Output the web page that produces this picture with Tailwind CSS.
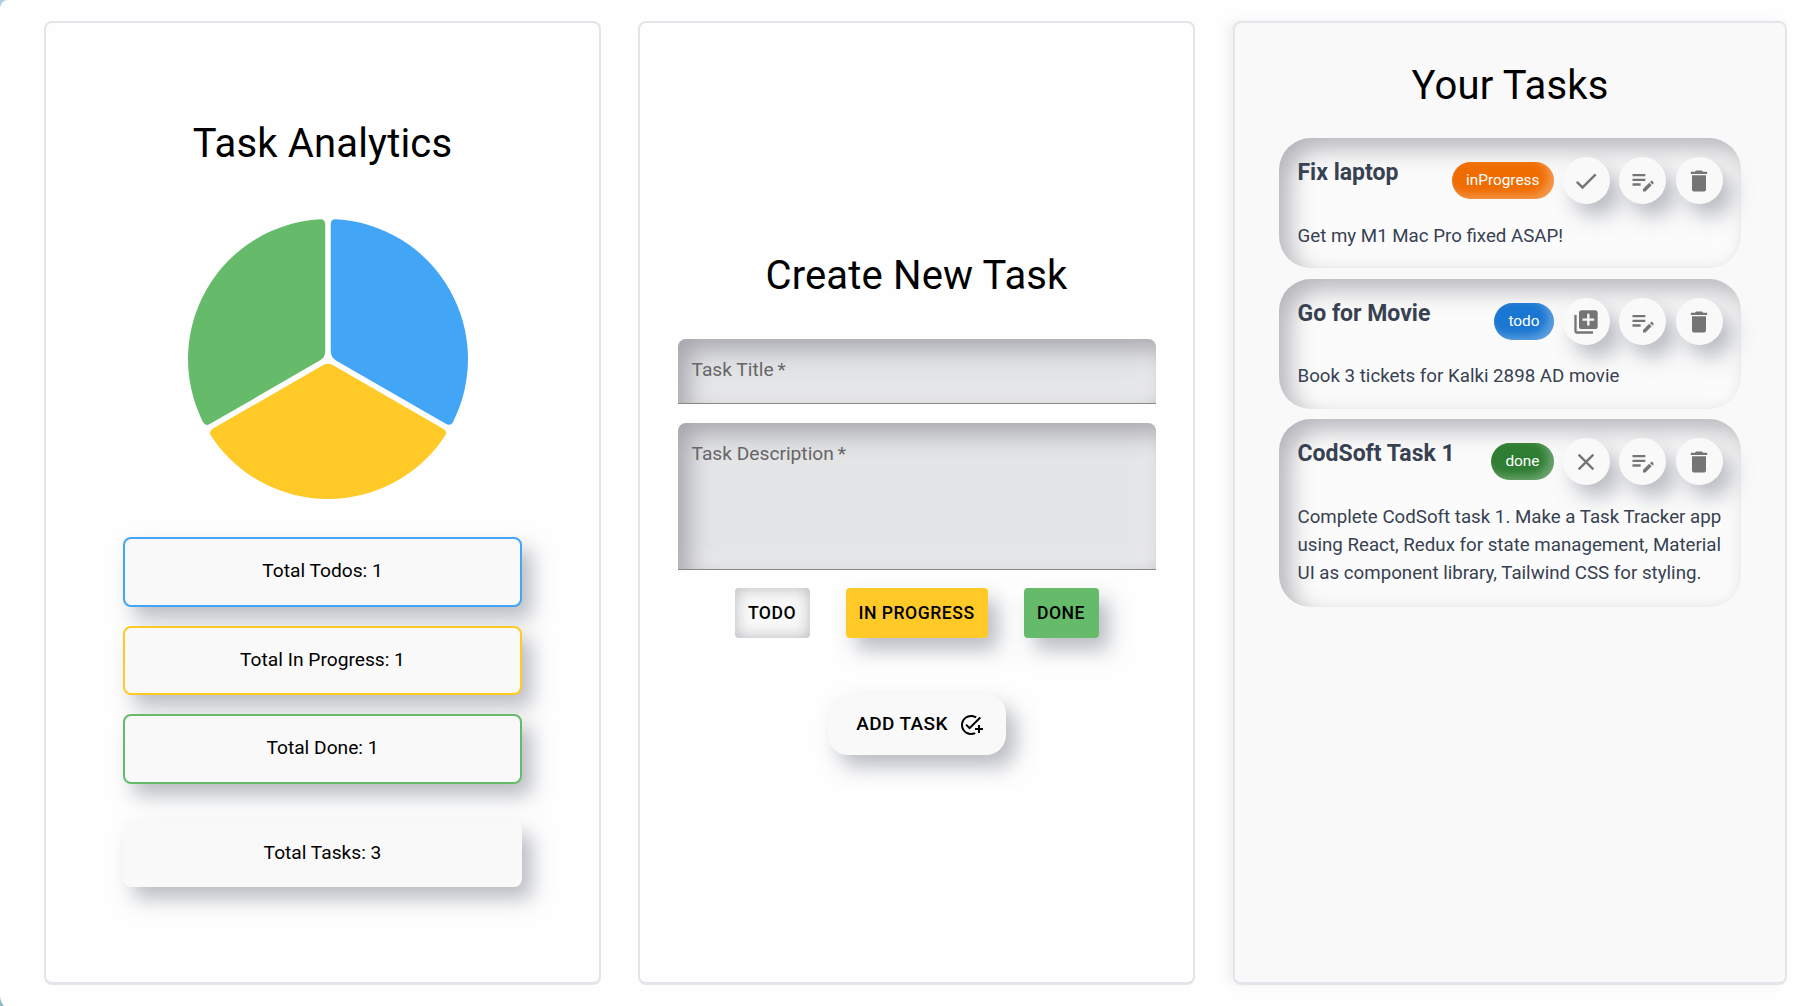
<!DOCTYPE html>
<html lang="en">
<head>
  <meta charset="UTF-8">
  <meta name="viewport" content="width=device-width, initial-scale=1.0">
  <title>Task Tracker</title>
  <script src="https://cdn.jsdelivr.net/npm/@tailwindcss/browser@4"></script>
</head>
<body class="bg-[#fefefe] font-['Roboto',sans-serif] text-black">
  <!-- Window corners -->
  <svg class="absolute top-0 left-0" width="7" height="7" viewBox="0 0 7 7"><path fill="#a9cfe8" d="M0 0H7Q1.5 1 0 7Z"/></svg>
  <svg class="absolute bottom-0 left-0" width="4" height="9" viewBox="0 0 4 9"><path fill="#8fb9c4" d="M0 0Q1 6 4 9H0Z"/></svg>

  <div class="flex h-[1006px] overflow-hidden pl-[44px] pr-[30px] pt-[21px]">

    <!-- Analytics -->
    <section class="w-[557px] h-[964px] flex flex-col items-center border-2 border-[#e4e5ea] border-b-[3px] rounded-lg bg-[#fefefe] pt-[99px]">
      <h2 class="text-[40px] leading-[44px] tracking-[0.16px]">Task Analytics</h2>
      <svg class="mt-[50.5px] ml-[11px]" width="284" height="284" viewBox="-142 -142 284 284">
        <path fill="#42a5f5" d="M2.75 -8 L2.75 -135 Q2.75 -140 8 -139.77 A140 140 0 0 1 124.9 63.2 Q122.6 67.6 117.4 64.6 L8.8 1.9 A11 11 0 0 1 2.75 -8 Z"/>
        <path fill="#ffca28" transform="rotate(120)" d="M2.75 -8 L2.75 -135 Q2.75 -140 8 -139.77 A140 140 0 0 1 124.9 63.2 Q122.6 67.6 117.4 64.6 L8.8 1.9 A11 11 0 0 1 2.75 -8 Z"/>
        <path fill="#66bb6a" transform="rotate(240)" d="M2.75 -8 L2.75 -135 Q2.75 -140 8 -139.77 A140 140 0 0 1 124.9 63.2 Q122.6 67.6 117.4 64.6 L8.8 1.9 A11 11 0 0 1 2.75 -8 Z"/>
      </svg>
      <div class="w-[399px] mt-[36px] flex flex-col text-[19.2px]">
        <div class="h-[70px] flex items-center justify-center rounded-lg bg-[#f9f9f9] border-2 border-[#42a5f5] shadow-[10px_12px_20px_rgba(120,125,140,0.5)]">Total Todos: 1</div>
        <div class="h-[69px] mt-[19px] flex items-center justify-center rounded-lg bg-[#f9f9f9] border-2 border-[#ffca28] shadow-[10px_12px_20px_rgba(120,125,140,0.5)]">Total In Progress: 1</div>
        <div class="h-[70px] mt-[19px] flex items-center justify-center rounded-lg bg-[#f9f9f9] border-2 border-[#66bb6a] shadow-[10px_12px_20px_rgba(120,125,140,0.5)]">Total Done: 1</div>
        <div class="h-[66px] mt-[37px] flex items-center justify-center rounded-lg bg-[#f9f9f9] shadow-[10px_12px_20px_rgba(120,125,140,0.5)]">Total Tasks: 3</div>
      </div>
    </section>

    <!-- New task form -->
    <section class="w-[557px] h-[964px] ml-[37px] flex flex-col items-center border-2 border-[#e4e5ea] border-b-[3px] rounded-lg bg-[#fefefe] pt-[231px]">
      <h2 class="text-[40px] leading-[44px] tracking-[0.16px]">Create New Task</h2>
      <div class="w-[478px] h-[65px] mt-[41px] px-[14px] pt-[19px] text-[19.2px] leading-[24px] text-[#666] bg-[#e4e5e7] border-b border-[#888] rounded-t-lg shadow-[inset_10px_10px_24px_rgba(130,130,140,0.65),inset_-10px_-10px_20px_rgba(255,255,255,0.35)]">Task Title&thinsp;*</div>
      <div class="w-[478px] h-[147px] mt-[19px] px-[14px] pt-[19px] text-[19.2px] leading-[24px] text-[#666] bg-[#e4e5e7] border-b border-[#888] rounded-t-lg shadow-[inset_10px_10px_24px_rgba(130,130,140,0.65),inset_-10px_-10px_20px_rgba(255,255,255,0.35)]">Task Description&thinsp;*</div>
      <div class="flex gap-[36px] mt-[18px] text-[17.6px] font-medium tracking-[0.5px]">
        <button class="h-[50px] w-[75px] rounded bg-[#f9f9f9] shadow-[inset_0_0_16px_rgba(130,130,140,0.55)]">TODO</button>
        <button class="h-[50px] w-[142px] rounded bg-[#ffca28] shadow-[10px_12px_20px_rgba(120,125,140,0.5)]">IN PROGRESS</button>
        <button class="h-[50px] w-[75px] rounded bg-[#66bb6a] shadow-[10px_12px_20px_rgba(120,125,140,0.5)]">DONE</button>
      </div>
      <button class="w-[178px] h-[61px] mt-[56px] pl-[6px] flex items-center justify-center gap-[11px] rounded-[20px] bg-[#f9f9f9] text-[19px] font-medium tracking-[0.4px] shadow-[10px_12px_20px_rgba(120,125,140,0.5)]">
        ADD TASK
        <svg width="24" height="24" viewBox="0 0 24 24" fill="currentColor"><path d="M22 5.18 10.59 16.6l-4.24-4.24 1.41-1.41 2.83 2.83 10-10L22 5.18zM12 20c-4.41 0-8-3.59-8-8s3.59-8 8-8c1.57 0 3.04.46 4.28 1.25l1.45-1.45C16.1 2.67 14.13 2 12 2 6.48 2 2 6.48 2 12s4.48 10 10 10c1.73 0 3.36-.44 4.78-1.22l-1.5-1.5c-1 .46-2.11.72-3.28.72zm7-5h-3v2h3v3h2v-3h3v-2h-3v-3h-2v3z"/></svg>
      </button>
    </section>

    <!-- Task list -->
    <section class="w-[554px] h-[964px] ml-[38px] flex flex-col items-center border-2 border-[#e4e5ea] border-b-[3px] rounded-lg bg-[#f9f9f9] pt-[41px] shadow-[-6px_0_10px_rgba(120,125,140,0.1)]">
      <h2 class="text-[40px] leading-[44px] tracking-[0.16px]">Your Tasks</h2>

      <div class="w-[462px] h-[130px] mt-[30px] pl-[18.5px] pr-[18.5px] pt-[19px] rounded-[32px] bg-[#fbfbfb] shadow-[inset_10px_10px_24px_rgba(130,130,140,0.6),inset_-10px_-10px_20px_rgba(255,255,255,0.6)]">
        <div class="flex items-start justify-between">
          <h3 class="text-[23px] leading-[32px] font-bold text-[#374151]">Fix laptop</h3>
          <div class="flex items-center">
            <span class="h-[37px] px-[14px] flex items-center rounded-full text-white text-[15.4px] bg-[#ef6c00] shadow-[inset_-6px_-4px_10px_rgba(255,255,255,0.3)]">inProgress</span>
            <button class="w-[47px] h-[47px] ml-[9px] flex items-center justify-center rounded-full bg-[#f9f9f9] text-[#757575] shadow-[10px_12px_20px_rgba(120,125,140,0.5)]">
              <svg width="28" height="28" viewBox="0 0 24 24" fill="currentColor"><path d="M9 16.17 4.83 12l-1.42 1.41L9 19 21 7l-1.41-1.41z"/></svg>
            </button>
            <button class="w-[47px] h-[47px] ml-[9.5px] flex items-center justify-center rounded-full bg-[#f9f9f9] text-[#757575] shadow-[10px_12px_20px_rgba(120,125,140,0.5)]">
              <svg width="28" height="28" viewBox="0 0 24 24" fill="currentColor"><path d="M3 10h11v2H3zm0-2h11V6H3zm0 8h7v-2H3zm15.01-3.13.71-.71c.39-.39 1.02-.39 1.41 0l.71.71c.39.39.39 1.02 0 1.41l-.71.71zm-.71.71-5.3 5.3V21h2.12l5.3-5.3z"/></svg>
            </button>
            <button class="w-[47px] h-[47px] ml-[9.5px] flex items-center justify-center rounded-full bg-[#f9f9f9] text-[#757575] shadow-[10px_12px_20px_rgba(120,125,140,0.5)]">
              <svg width="28" height="28" viewBox="0 0 24 24" fill="currentColor"><path d="M6 19c0 1.1.9 2 2 2h8c1.1 0 2-.9 2-2V7H6v12zM19 4h-3.5l-1-1h-5l-1 1H5v2h14V4z"/></svg>
            </button>
          </div>
        </div>
        <p class="mt-[18px] text-[18.72px] leading-[28px] text-[#374151]">Get my M1 Mac Pro fixed ASAP!</p>
      </div>

      <div class="w-[462px] h-[130px] mt-[11px] pl-[18.5px] pr-[18.5px] pt-[19px] rounded-[32px] bg-[#fbfbfb] shadow-[inset_10px_10px_24px_rgba(130,130,140,0.6),inset_-10px_-10px_20px_rgba(255,255,255,0.6)]">
        <div class="flex items-start justify-between">
          <h3 class="text-[23px] leading-[32px] font-bold text-[#374151]">Go for Movie</h3>
          <div class="flex items-center">
            <span class="h-[37px] px-[14px] flex items-center rounded-full text-white text-[15.4px] bg-[#1976d2] shadow-[inset_-6px_-4px_10px_rgba(255,255,255,0.3)]">todo</span>
            <button class="w-[47px] h-[47px] ml-[9px] flex items-center justify-center rounded-full bg-[#f9f9f9] text-[#757575] shadow-[10px_12px_20px_rgba(120,125,140,0.5)]">
              <svg width="28" height="28" viewBox="0 0 24 24" fill="currentColor"><path d="M4 6H2v14c0 1.1.9 2 2 2h14v-2H4V6zm16-4H8c-1.1 0-2 .9-2 2v12c0 1.1.9 2 2 2h12c1.1 0 2-.9 2-2V4c0-1.1-.9-2-2-2zm-1 9h-4v4h-2v-4H9V9h4V5h2v4h4v2z"/></svg>
            </button>
            <button class="w-[47px] h-[47px] ml-[9.5px] flex items-center justify-center rounded-full bg-[#f9f9f9] text-[#757575] shadow-[10px_12px_20px_rgba(120,125,140,0.5)]">
              <svg width="28" height="28" viewBox="0 0 24 24" fill="currentColor"><path d="M3 10h11v2H3zm0-2h11V6H3zm0 8h7v-2H3zm15.01-3.13.71-.71c.39-.39 1.02-.39 1.41 0l.71.71c.39.39.39 1.02 0 1.41l-.71.71zm-.71.71-5.3 5.3V21h2.12l5.3-5.3z"/></svg>
            </button>
            <button class="w-[47px] h-[47px] ml-[9.5px] flex items-center justify-center rounded-full bg-[#f9f9f9] text-[#757575] shadow-[10px_12px_20px_rgba(120,125,140,0.5)]">
              <svg width="28" height="28" viewBox="0 0 24 24" fill="currentColor"><path d="M6 19c0 1.1.9 2 2 2h8c1.1 0 2-.9 2-2V7H6v12zM19 4h-3.5l-1-1h-5l-1 1H5v2h14V4z"/></svg>
            </button>
          </div>
        </div>
        <p class="mt-[17px] text-[18.72px] leading-[28px] text-[#374151]">Book 3 tickets for Kalki 2898 AD movie</p>
      </div>

      <div class="w-[462px] h-[188px] mt-[10px] pl-[18.5px] pr-[12px] pt-[19px] rounded-[32px] bg-[#fbfbfb] shadow-[inset_10px_10px_24px_rgba(130,130,140,0.6),inset_-10px_-10px_20px_rgba(255,255,255,0.6)]">
        <div class="flex items-start justify-between pr-[6.5px]">
          <h3 class="text-[23px] leading-[32px] font-bold text-[#374151]">CodSoft Task 1</h3>
          <div class="flex items-center">
            <span class="h-[37px] px-[14px] flex items-center rounded-full text-white text-[15.4px] bg-[#2e7d32] shadow-[inset_-6px_-4px_10px_rgba(255,255,255,0.3)]">done</span>
            <button class="w-[47px] h-[47px] ml-[9px] flex items-center justify-center rounded-full bg-[#f9f9f9] text-[#757575] shadow-[10px_12px_20px_rgba(120,125,140,0.5)]">
              <svg width="28" height="28" viewBox="0 0 24 24" fill="currentColor"><path d="M19 6.41 17.59 5 12 10.59 6.41 5 5 6.41 10.59 12 5 17.59 6.41 19 12 13.41 17.59 19 19 17.59 13.41 12z"/></svg>
            </button>
            <button class="w-[47px] h-[47px] ml-[9.5px] flex items-center justify-center rounded-full bg-[#f9f9f9] text-[#757575] shadow-[10px_12px_20px_rgba(120,125,140,0.5)]">
              <svg width="28" height="28" viewBox="0 0 24 24" fill="currentColor"><path d="M3 10h11v2H3zm0-2h11V6H3zm0 8h7v-2H3zm15.01-3.13.71-.71c.39-.39 1.02-.39 1.41 0l.71.71c.39.39.39 1.02 0 1.41l-.71.71zm-.71.71-5.3 5.3V21h2.12l5.3-5.3z"/></svg>
            </button>
            <button class="w-[47px] h-[47px] ml-[9.5px] flex items-center justify-center rounded-full bg-[#f9f9f9] text-[#757575] shadow-[10px_12px_20px_rgba(120,125,140,0.5)]">
              <svg width="28" height="28" viewBox="0 0 24 24" fill="currentColor"><path d="M6 19c0 1.1.9 2 2 2h8c1.1 0 2-.9 2-2V7H6v12zM19 4h-3.5l-1-1h-5l-1 1H5v2h14V4z"/></svg>
            </button>
          </div>
        </div>
        <p class="mt-[18px] text-[18.72px] leading-[28px] text-[#374151]">Complete CodSoft task 1. Make a Task Tracker app using React, Redux for state management, Material UI as component library, Tailwind CSS for styling.</p>
      </div>
    </section>
  </div>
</body>
</html>
